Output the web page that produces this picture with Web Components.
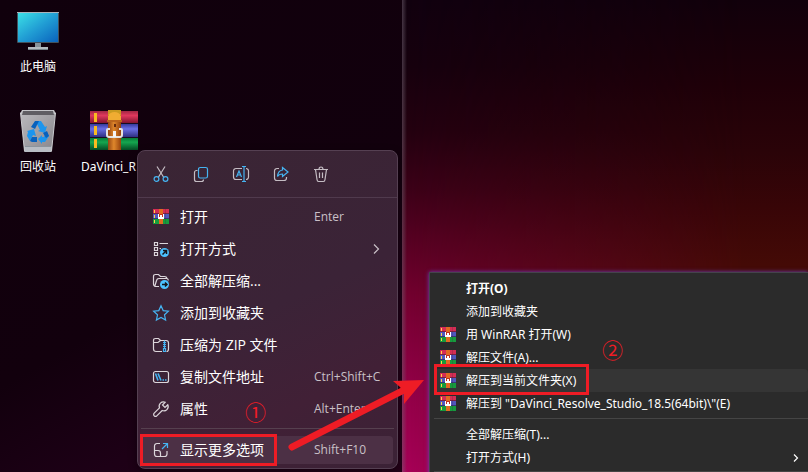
<!DOCTYPE html>
<html lang="zh-CN">
<head>
<meta charset="utf-8">
<meta name="viewport" content="width=device-width, initial-scale=1">
<title>解压教程</title>
<style>
	html, body {
		height: 100%;
		margin: 0;
		background: #10000c;
	}
	body {
		font-family: "Open Sans", "Noto Sans CJK SC", sans-serif;
	}
</style>
</head>
<body>

<tutorial-desktop>
	<desktop-pane slot="before">
		<desktop-icon icon="pc" slot="column">此电脑</desktop-icon>
		<desktop-icon icon="bin" slot="column">回收站</desktop-icon>
		<desktop-icon icon="archive" slot="second" long>DaVinci_R</desktop-icon>
	</desktop-pane>

	<modern-menu slot="menu">
		<tool-button slot="tools" icon="cut" label="剪切"></tool-button>
		<tool-button slot="tools" icon="copy" label="复制"></tool-button>
		<tool-button slot="tools" icon="rename" label="重命名"></tool-button>
		<tool-button slot="tools" icon="share" label="共享"></tool-button>
		<tool-button slot="tools" icon="trash" label="删除"></tool-button>
		<modern-item icon="rar" keys="Enter">打开</modern-item>
		<modern-item icon="openwith" more>打开方式</modern-item>
		<modern-item icon="extract">全部解压缩...</modern-item>
		<modern-item icon="star">添加到收藏夹</modern-item>
		<modern-item icon="zip">压缩为 ZIP 文件</modern-item>
		<modern-item icon="path" keys="Ctrl+Shift+C">复制文件地址</modern-item>
		<modern-item icon="wrench" keys="Alt+Enter">属性</modern-item>
		<modern-item slot="footer" icon="expand" keys="Shift+F10" active>显示更多选项</modern-item>
	</modern-menu>

	<classic-menu slot="classic">
		<classic-item strong>打开(O)</classic-item>
		<classic-item>添加到收藏夹</classic-item>
		<classic-item icon>用 WinRAR 打开(W)</classic-item>
		<classic-item icon>解压文件(A)...</classic-item>
		<classic-item icon active>解压到当前文件夹(X)</classic-item>
		<classic-item icon>解压到 "DaVinci_Resolve_Studio_18.5(64bit)\"(E)</classic-item>
		<classic-item slot="footer">全部解压缩(T)...</classic-item>
		<classic-item slot="footer" more>打开方式(H)</classic-item>
	</classic-menu>

	<step-marks slot="marks"></step-marks>
</tutorial-desktop>

<script>
const ICONS = {
	pc: `<svg width="48" height="48" viewBox="0 0 48 48">
		<defs><linearGradient id="scr" x1="0" y1="0" x2="1" y2="1"><stop offset="0" stop-color="#3be0e6"/><stop offset=".5" stop-color="#219ed4"/><stop offset="1" stop-color="#0a62bd"/></linearGradient></defs>
		<rect x="3" y="6" width="42" height="31" rx="1" fill="#42515c"/>
		<path d="M3 6.500h42" stroke="#a9b3bb"/>
		<rect x="4" y="7" width="40" height="29" fill="url(#scr)"/>
		<path d="M21 37h6v5h-6z" fill="#87929a"/><path d="M14 41h20v3H14z" fill="#b3bbc1"/><path d="M14 43h20v1H14z" fill="#77838a"/>
	</svg>`,
	bin: `<svg width="48" height="48" viewBox="0 0 48 48">
		<defs><linearGradient id="bin" x1="0" y1="0" x2="1" y2="1"><stop offset="0" stop-color="#bab9bd"/><stop offset=".5" stop-color="#a19fa4"/><stop offset="1" stop-color="#85838a"/></linearGradient></defs>
		<path d="M6.500 6h35l-4 40h-27z" fill="url(#bin)"/>
		<path d="M8 4h32l2 4H6z" fill="#c4c4c8"/><path d="M9 5h30l1 4H8z" fill="#5f5d63"/>
		<path d="M10 40h28l-.5 6h-27z" fill="#b9bdc4"/><path d="M10.500 40.500h27" stroke="#8c949d"/>
		<path d="M6.500 7l4 38M41.500 7l-4 38" stroke="#cbcbcf" fill="none"/>
		<path d="M21 15h6l4 6 2-1-2 7-7-2 2-1-3-6zM13 25l7-2 2 7-3-1-3 6-3-5 1-4zM33 26l2 4-4 6h-3v2l-4-5 4-4v2h2l1-3z" fill="#1c95ee"/>
		<path d="M17 21l4-6h4l-4 8zM16 35l2-4h5v5h-5zM29 27l4-2 2 5-3 2z" fill="#0861bd"/>
	</svg>`,
	archive: `<svg width="48" height="48" viewBox="0 2 48 48">
		<defs>
			<linearGradient id="r" x2="0" y2="1"><stop stop-color="#a22743"/><stop offset=".35" stop-color="#e0385d"/><stop offset="1" stop-color="#75102a"/></linearGradient>
			<linearGradient id="b" x2="0" y2="1"><stop stop-color="#363a9d"/><stop offset=".35" stop-color="#696ee4"/><stop offset="1" stop-color="#282875"/></linearGradient>
			<linearGradient id="g" x2="0" y2="1"><stop stop-color="#087b38"/><stop offset=".35" stop-color="#15a64f"/><stop offset="1" stop-color="#044b24"/></linearGradient>
			<linearGradient id="s"><stop stop-color="#944512"/><stop offset=".45" stop-color="#df872b"/><stop offset="1" stop-color="#96420d"/></linearGradient>
		</defs>
		<path d="M0 7h48v13H0z" fill="url(#r)"/><path d="M0 20h48v14H0z" fill="url(#b)"/><path d="M0 34h48v12H0z" fill="url(#g)"/>
		<path d="M0 19.500h48M0 33.500h48" stroke="#160d23"/>
		<path d="M4 9h3v9H4zM4 22h3v9H4zM4 35h3v9H4z" fill="#f9bb20"/>
		<path d="M18 6h13v40H18z" fill="url(#s)"/><path d="M18 6h13v5H18z" fill="#c99a20"/>
		<path d="M18 12q2-4 6.500-4t6.500 4v4H18z" fill="#f0ac32"/><path d="M17 16h15v2H17z" fill="#bb651b"/><path d="M24 20h2v3h-2z" fill="#672b0d"/>
		<path d="M20 25h-2q-1 0-1 1v5q0 2 2 2h11q2 0 2-2v-5q0-1-1-1h-2" fill="none" stroke="#e5e3e0" stroke-width="2"/>
		<path d="M24.500 27v6" stroke="#f5f5f5" stroke-width="3"/>
	</svg>`,
	rar: `<svg width="16" height="16" viewBox="0 1 16 16" shape-rendering="crispEdges">
		<path d="M0 1h16v5H0z" fill="#d52d54"/><path d="M0 6h16v5H0z" fill="#5057bd"/><path d="M0 11h16v5H0z" fill="#169b3d"/>
		<path d="M0 5h16v1H0zM0 10h16v1H0z" fill="#221530" opacity=".5"/>
		<path d="M1 2h1v3H1zM1 7h1v3H1zM1 12h1v3H1z" fill="#ffd449"/>
		<path d="M12 1h1v15h-1z" fill="#352037" opacity=".2"/>
		<path d="M6 1h4v15H6z" fill="#e16a22"/>
		<path d="M5 6h6v5H5z" fill="#fff"/>
		<path d="M6 6h4v1H6zM6 7h1v2H6zM9 7h1v2H9z" fill="#c3301f"/>
	</svg>`,
	cut: `<path d="M4 .5l6.500 10.500M12 .5L5.500 11"/><g class="c"><circle cx="3.500" cy="13" r="2.400"/><circle cx="12.500" cy="13" r="2.400"/></g>`,
	copy: `<path d="M4.500 4.500h-1a2 2 0 0 0-2 2v7a2 2 0 0 0 2 2h5a2 2 0 0 0 2-2"/><rect class="c" x="5.500" y="1.500" width="9" height="10.500" rx="1.800"/>`,
	rename: `<path d="M9 2.500H3a2.500 2.500 0 0 0-2.500 2.500v6a2.500 2.500 0 0 0 2.500 2.500h6M13 2.500a2.500 2.500 0 0 1 2.500 2.500v6a2.500 2.500 0 0 1-2.500 2.500"/><path class="c" d="M3.500 11L6 5l2.500 6M4.300 9h3.400M9 .5h4M11 .5v15M9 15.500h4"/>`,
	share: `<path d="M6 2.500H4A2.500 2.500 0 0 0 1.500 5v7A2.500 2.500 0 0 0 4 14.500h7a2.500 2.500 0 0 0 2.500-2.500v-1"/><path class="c" d="M9.500 1.500l5.500 4.500-5.500 4.500V8Q6 8 4.500 10.500 5 4.500 9.500 4z"/>`,
	trash: `<path d="M1 3.500h14M2.500 3.500l1.500 10q.2 2 1.500 2h5q1.300 0 1.500-2l1.500-10M6 3.500q0-2.500 2-2.500t2 2.500M6.500 6.500v5.500M9.500 6.500v5.500"/>`,
	openwith: `<path d="M1.500 1.500h3v3h-3zM1.500 6.500h3v3h-3zM1.500 11.500h3v3h-3zM6.500 2.500H15M6.500 7.500H8"/><circle class="d" cx="11.500" cy="11.500" r="4.500"/><path class="k" d="M9.500 13.500l4-4M10 9.500h3.500V13"/>`,
	extract: `<path d="M6 13.500H3A2.500 2.500 0 0 1 .5 11V3.500Q.5 1.500 2.500 1.500h3l2 2h4q2 0 2.500 2H6q-2 0-2.500 2l-1.500 5M13.500 5.500q2 0 1.500 2"/><circle class="d" cx="11.500" cy="11.500" r="4.500"/><path class="k" d="M9 11.500h5M12 9.500l2 2-2 2"/>`,
	star: `<path class="c" d="M8 .8l2.200 4.800 5.200.6-3.900 3.600 1.100 5.300L8 12.500l-4.600 2.600 1.100-5.300L.6 6.200l5.200-.6z"/>`,
	zip: `<path d="M9 14.500H3Q.5 14.500.5 12V3.500q0-2 2-2h3l2 2H13q2.500 0 2.500 2.500v6q0 2.500-2 2.500M.5 5.500H5l2.500-2"/><path class="c" d="M11.500 3.500v8M10 5.500h3M10 7.500h3M10 9.500h3M10.500 11.500h2v3h-2z"/>`,
	path: `<rect x=".5" y="2.500" width="15" height="11" rx="2"/><path class="c w" d="M2.500 4.500l2.500 7M5 4.500l3 7M9.500 11h1.500M12 11h1.500"/>`,
	wrench: `<path d="M14.800 3.800L12 6.500 9.500 4l2.700-2.800A4.300 4.300 0 0 0 6.500 6.800L1.200 12.200a1.800 1.800 0 0 0 2.600 2.600L9.200 9.500a4.300 4.300 0 0 0 5.600-5.700z"/>`,
	expand: `<path d="M7 1.500H4A2.500 2.500 0 0 0 1.500 4v8A2.500 2.500 0 0 0 4 14.500h7.500a2.500 2.500 0 0 0 2.500-2.500V9M1.500 8.500H5A2.500 2.500 0 0 1 7.500 11v3.500"/><path class="c" d="M9 7l5.500-5.500M10 1.500h4.500V6"/>`
};

// los iconos de linea comparten lienzo de 16px
function getIcon(name) {
	const icon = ICONS[name] || "";
	if (icon.startsWith("<svg")) return icon;
	return `<svg class="line" width="16" height="16" viewBox="0 0 16 16">${icon}</svg>`;
}

const lineStyles = `
	svg { display: block; flex: none; }
	.line { overflow: visible; fill: none; stroke: #dcd6db; stroke-width: 1.200; }
	.line .c { stroke: #45b4f2; }
	.line .w { stroke-width: 1.600; }
	.line .d { fill: #4cc2ff; stroke: none; }
	.line .k { stroke: #15151c; stroke-width: 1.500; }
`;

class BaseElement extends HTMLElement {
	constructor() {
		super();
		this.attachShadow({ mode: "open" });
	}

	render() {
		const template = document.createElement("template");
		template.innerHTML = `<style>${this.getStyles()}</style>${this.getTemplate()}`;
		this.shadowRoot.replaceChildren(template.content.cloneNode(true));
	}

	connectedCallback() {
		this.render();
	}
}

class TutorialDesktop extends BaseElement {
	getStyles() {
		return `
			:host {
				display: grid;
				grid-template-columns: 402fr 406fr;
				position: relative;
				height: 100%;
				overflow: hidden;
			}
			.left {
				background: linear-gradient(150deg, #10000c 0%, #12000d 55%, #1d0016 75%, #240018 100%);
			}
			.right {
				position: relative;
				background: linear-gradient(#11000f 0%, #16000e 14%, #240010 28%, #3c0018 40%, #5a0024 52%, #72002f 62%, #900046 80%, #a80058 100%);
			}
			/* el lado derecho del fondo tira a marron */
			.right::before {
				content: "";
				position: absolute;
				inset: 0;
				background: linear-gradient(#11000b 0%, #1f0008 18%, #2a0308 32%, #380507 44%, #440a06 56%, #440a06 100%);
				-webkit-mask-image: linear-gradient(90deg, transparent, #000 85%);
				mask-image: linear-gradient(90deg, transparent, #000 85%);
			}
			.right::after {
				content: "";
				position: absolute;
				inset: 0 auto 0 0;
				width: 5px;
				background: linear-gradient(90deg, rgba(120, 105, 120, .5), transparent);
			}
			/* los menus flotan sobre el escritorio */
			slot[name="menu"]::slotted(*) {
				position: absolute;
				left: 137px;
				top: 150px;
			}
			slot[name="classic"]::slotted(*) {
				position: absolute;
				left: 429px;
				right: 0;
				top: 272px;
			}
			slot[name="marks"]::slotted(*) {
				position: absolute;
				inset: 0;
			}
		`;
	}

	getTemplate() {
		return `
			<div class="left"><slot name="before"></slot></div>
			<div class="right"></div>
			<slot name="menu"></slot>
			<slot name="classic"></slot>
			<slot name="marks"></slot>
		`;
	}
}

class DesktopPane extends BaseElement {
	getStyles() {
		return `
			:host { display: flex; align-items: flex-end; width: max-content; padding-top: 6px; }
			.column { display: grid; gap: 30px; }
		`;
	}

	getTemplate() {
		return `
			<div class="column"><slot name="column"></slot></div>
			<slot name="second"></slot>
		`;
	}
}

class DesktopIcon extends BaseElement {
	getStyles() {
		return `
			:host {
				display: flex;
				flex-direction: column;
				align-items: center;
				gap: 4px;
				width: 76px;
				color: #fff;
				font-family: "Noto Sans", "Noto Sans CJK SC", sans-serif;
				font-size: 12px;
				line-height: 18px;
			}
			:host([long]) span { width: 66px; }
			svg { display: block; }
		`;
	}

	getTemplate() {
		return `${getIcon(this.getAttribute("icon"))}<span><slot></slot></span>`;
	}
}

class ModernMenu extends BaseElement {
	getStyles() {
		return `
			:host {
				display: block;
				box-sizing: border-box;
				width: 261px;
				border: 1px solid #554052;
				border-radius: 8px;
				background: linear-gradient(155deg, #3a2534, #3b2337 50%, #412036 75%, #3b2236);
				box-shadow: 0 3px 8px rgba(0, 0, 0, .4);
			}
			.tools {
				display: flex;
				gap: 8px;
				padding: 7px;
				border-bottom: 1px solid #503a4d;
			}
			.items { padding: 3px 4px; }
			.footer { margin: 0 3px; padding: 7px 1px 4px; border-top: 1px solid #56404f; }
		`;
	}

	getTemplate() {
		return `
			<div class="tools"><slot name="tools"></slot></div>
			<div class="items"><slot></slot></div>
			<div class="footer"><slot name="footer"></slot></div>
		`;
	}
}

class ToolButton extends BaseElement {
	getStyles() {
		return `
			:host { display: block; }
			button {
				display: grid;
				place-items: center;
				width: 32px;
				height: 32px;
				padding: 0;
				border: 0;
				background: none;
			}
			${lineStyles}
			.line { stroke: #c4bcc3; }
		`;
	}

	getTemplate() {
		return `<button type="button" aria-label="${this.getAttribute("label")}">${getIcon(this.getAttribute("icon"))}</button>`;
	}
}

class ModernItem extends BaseElement {
	getStyles() {
		return `
			:host { display: block; }
			button {
				display: flex;
				align-items: center;
				width: 100%;
				height: 32px;
				padding: 0 10px 0 11px;
				border: 0;
				border-radius: 4px;
				background: none;
				color: #fff;
				font: inherit;
				font-size: 14px;
				line-height: 20px;
				text-align: left;
				white-space: nowrap;
			}
			:host([active]) button { height: 28px; background: #4c3045; }
			.label { flex: 1; margin-left: 11px; }
			.keys { width: 69px; color: #c9c0c7; font-size: 12px; }
			.arrow { fill: none; stroke: #c9c0c7; stroke-width: 1.200; }
			${lineStyles}
		`;
	}

	getTemplate() {
		const keys = this.getAttribute("keys");
		return `
			<button type="button">
				${getIcon(this.getAttribute("icon"))}
				<span class="label"><slot></slot></span>
				${keys ? `<span class="keys">${keys}</span>` : ""}
				${this.hasAttribute("more") ? `<svg class="arrow" width="12" height="12" viewBox="0 0 12 12"><path d="M3 1.500L7.500 6 3 10.500"/></svg>` : ""}
			</button>
		`;
	}
}

class ClassicMenu extends BaseElement {
	getStyles() {
		return `
			:host {
				display: block;
				box-sizing: border-box;
				padding: 4px 0;
				border: 1px solid #45434c;
				border-right: 0;
				background: #2b2b2b;
				box-shadow: 0 0 4px #6a45c0;
			}
			.footer { margin: 3px 0 3px 4px; padding: 4px 0 2px; border-top: 1px solid #454545; border-bottom: 1px solid #454545; }
		`;
	}

	getTemplate() {
		return `<div class="items"><slot></slot></div><div class="footer"><slot name="footer"></slot></div>`;
	}
}

class ClassicItem extends BaseElement {
	getStyles() {
		return `
			:host {
				display: block;
				margin-left: 4px;
				font-family: "Noto Sans", "Noto Sans CJK SC", sans-serif;
			}
			:host([slot="footer"]) { margin-left: 0; }
			button {
				display: grid;
				grid-template-columns: 16px 1fr auto;
				gap: 10px;
				align-items: center;
				width: 100%;
				height: 23px;
				padding: 0 8px 0 6px;
				border: 0;
				border-radius: 4px;
				background: none;
				color: #fff;
				font: inherit;
				font-size: 12px;
				line-height: 18px;
				text-align: left;
				white-space: nowrap;
			}
			:host([active]) button { background: #353535; }
			:host([strong]) button { font-weight: bold; }
			svg { display: block; }
			.arrow { fill: none; stroke: #fff; stroke-width: 1.200; }
		`;
	}

	getTemplate() {
		return `
			<button type="button">
				<span>${this.hasAttribute("icon") ? getIcon("rar") : ""}</span>
				<span><slot></slot></span>
				${this.hasAttribute("more") ? `<svg class="arrow" width="8" height="8" viewBox="0 0 8 8"><path d="M2 .5L5.500 4 2 7.500"/></svg>` : ""}
			</button>
		`;
	}
}

// marcas rojas del tutorial: recuadros, numeros y flecha
class StepMarks extends BaseElement {
	getStyles() {
		return `
			:host { display: block; pointer-events: none; color: #ee1c25; }
			.box { position: absolute; box-sizing: border-box; border: 3px solid #ee1c25; }
			.first { left: 140px; top: 434px; width: 137px; height: 32px; }
			.second { left: 434px; top: 364px; width: 155px; height: 31px; }
			.num { position: absolute; font: 21px/24px "Noto Sans CJK SC", sans-serif; }
			.one { left: 245px; top: 399px; }
			.two { left: 602px; top: 337px; }
			svg { position: absolute; left: 280px; top: 360px; }
		`;
	}

	getTemplate() {
		return `
			<div class="box first"></div>
			<div class="box second"></div>
			<span class="num one">①</span>
			<span class="num two">②</span>
			<svg width="160" height="100" viewBox="280 360 160 100">
				<path d="M292 447L404 390" stroke="#ee1c25" stroke-width="7" stroke-linecap="round"/>
				<path d="M393 381L424 380 404 404 404 393 400 387z" fill="#ee1c25"/>
			</svg>
		`;
	}
}

customElements.define("tutorial-desktop", TutorialDesktop);
customElements.define("desktop-pane", DesktopPane);
customElements.define("desktop-icon", DesktopIcon);
customElements.define("modern-menu", ModernMenu);
customElements.define("tool-button", ToolButton);
customElements.define("modern-item", ModernItem);
customElements.define("classic-menu", ClassicMenu);
customElements.define("classic-item", ClassicItem);
customElements.define("step-marks", StepMarks);
</script>
</body>
</html>
